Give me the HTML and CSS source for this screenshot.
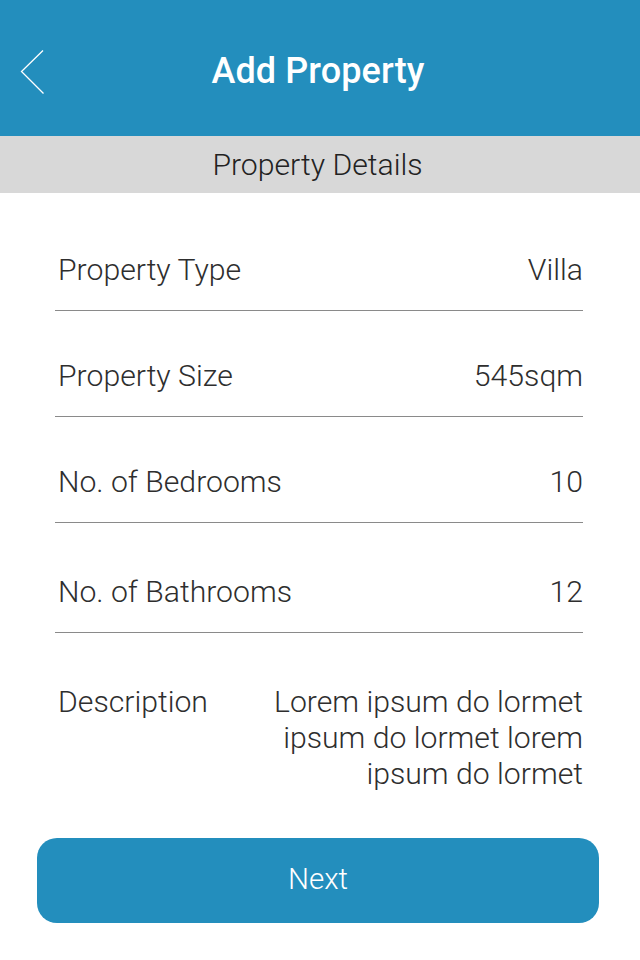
FILE: index.html
```html
<!DOCTYPE html>
<html>
<head>
<meta charset="utf-8">
<link rel="stylesheet" href="styles.css">
</head>
<body>
<div class="screen">
  <header class="topbar">
    <svg class="back" width="30" height="50" viewBox="0 0 30 50">
      <polyline points="23,5.5 1.5,26.5 23.5,48.5" fill="none" stroke="#fff" stroke-width="1.3"/>
    </svg>
    <h1 class="title">Add Property</h1>
  </header>
  <div class="section">Property Details</div>
  <div class="list">
    <div class="row"><span class="label">Property Type</span><span class="value">Villa</span></div>
    <div class="row"><span class="label">Property Size</span><span class="value">545sqm</span></div>
    <div class="row"><span class="label">No. of Bedrooms</span><span class="value">10</span></div>
    <div class="row row-last"><span class="label">No. of Bathrooms</span><span class="value">12</span></div>
    <div class="desc"><span class="label">Description</span><span class="value desc-value">Lorem ipsum do lormet<br>ipsum do lormet lorem<br>ipsum do lormet</span></div>
  </div>
  <button class="next">Next</button>
</div>
</body>
</html>
```
FILE: styles.css
```css
* { box-sizing: border-box; }
html, body { margin: 0; padding: 0; background: #fff; }
body { font-family: Roboto, "Noto Sans", sans-serif; color: #2e2e2e; }
.screen { width: 640px; height: 960px; display: flex; flex-direction: column; }
.topbar {
  position: relative;
  height: 136px;
  background: #238ebd;
  display: flex;
  align-items: center;
  justify-content: center;
}
.back { position: absolute; left: 20px; top: 45px; }
.title {
  margin: 0;
  margin-top: 5px;
  margin-right: 4px;
  color: #fff;
  font-size: 36px;
  font-weight: 500;
  letter-spacing: 0.1px;
}
.section {
  height: 57px;
  background: #d8d8d8;
  display: flex;
  align-items: center;
  justify-content: center;
  font-size: 30.2px;
  font-weight: 300;
  color: #222;
  padding-right: 5px;
}
.list { margin: 0 57px 0 55px; padding-top: 12px; }
.row {
  display: flex;
  justify-content: space-between;
  align-items: center;
  padding: 47px 0 22px 3px;
  line-height: 36px;
  font-size: 30.2px;
  font-weight: 300;
  border-bottom: 1px solid #8a8a8a;
}
.row-last { padding-top: 51px; }
.desc {
  display: flex;
  justify-content: space-between;
  align-items: flex-start;
  padding: 51px 0 0 3px;
  line-height: 36px;
  font-size: 30.2px;
  font-weight: 300;
}
.desc-value { text-align: right; }
.next {
  margin: auto 41px 37px 37px;
  height: 85px;
  border: none;
  border-radius: 20px;
  background: #238ebd;
  color: #fff;
  font-family: Roboto, "Noto Sans", sans-serif;
  font-size: 29.5px;
  font-weight: 300;
  padding-bottom: 4px;
}
```
